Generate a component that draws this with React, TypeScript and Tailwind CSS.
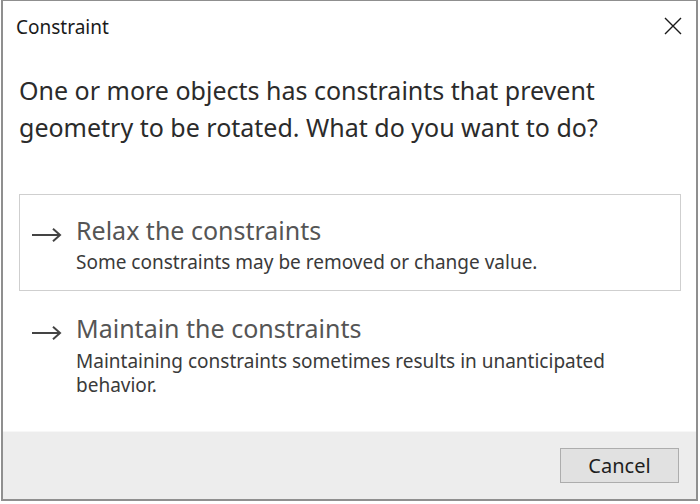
function Arrow() {
  return (
    <svg width="30" height="14" viewBox="0 0 30 14" className="mt-[13px] shrink-0">
      <path d="M0 7 H28 M21 0.8 L28 7 L21 13.2" fill="none" stroke="#444" strokeWidth="2" />
    </svg>
  );
}

export default function App() {
  return (
    <div className="w-[700px] h-[504px] bg-white" style={{ fontFamily: '"Noto Sans", "Open Sans", sans-serif' }}>
      {/* window frame */}
      <div className="ml-[1px] w-[697px] h-[501px] border-l-2 border-r-2 border-t border-b-2 border-[#8f8f8f] flex flex-col bg-white">
        {/* title bar */}
        <div className="h-[52px] flex items-start justify-between pl-[13px] pr-[14px] pt-[14px]">
          <span className="text-[19px] leading-[24px] text-[#1a1a1a]">Constraint</span>
          <svg width="18" height="18" viewBox="0 0 18 18" className="mt-[2px]">
            <path d="M1 1 L17 17 M17 1 L1 17" stroke="#1a1a1a" strokeWidth="1.4" />
          </svg>
        </div>

        {/* message */}
        <div className="pl-[16px] pr-[16px] pt-[19px] text-[25px] leading-[37px] text-[#2b2b2b]">
          One or more objects has constraints that prevent
          <br />
          geometry to be rotated. What do you want to do?
        </div>

        {/* options */}
        <div className="mt-[48px] pl-[16px] pr-[15px] flex flex-col">
          <div className="h-[97px] border border-[#cfcfcf] flex items-start pl-[12px] pt-[20px]">
            <div className="w-[44px] h-[30px] flex items-start">
              <Arrow />
            </div>
            <div className="flex flex-col">
              <span className="text-[25px] leading-[30px] text-[#555]">Relax the constraints</span>
              <span className="mt-[5px] text-[19px] leading-[24px] text-[#3a3a3a]">
                Some constraints may be removed or change value.
              </span>
            </div>
          </div>
          <div className="flex items-start pl-[13px] pt-[22px]">
            <div className="w-[44px] h-[30px] flex items-start">
              <Arrow />
            </div>
            <div className="flex flex-col">
              <span className="text-[25px] leading-[30px] text-[#555]">Maintain the constraints</span>
              <span className="mt-[6px] text-[19px] leading-[24px] text-[#3a3a3a]">
                Maintaining constraints sometimes results in unanticipated
                <br />
                behavior.
              </span>
            </div>
          </div>
        </div>

        {/* footer */}
        <div className="mt-auto h-[68px] bg-[#ededed] border-t border-[#f7f7f7] flex items-center justify-end pr-[17px]">
          <button className="w-[119px] h-[35px] bg-[#e1e1e1] border border-[#adadad] text-[20px] leading-[26px] text-[#1e1e1e]">
            Cancel
          </button>
        </div>
      </div>
    </div>
  );
}
